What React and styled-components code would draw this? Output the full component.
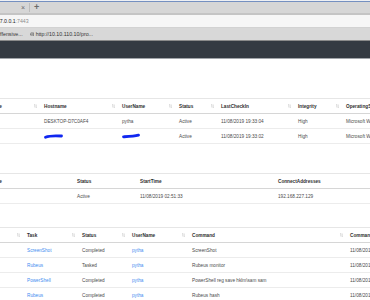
import React from "react";
import styled, { createGlobalStyle } from "styled-components";

const Global = createGlobalStyle`
  html, body { margin: 0; padding: 0; background: #fff; }
  body {
    width: 370px; height: 300px; overflow: hidden;
    font-family: "Liberation Sans", Arial, sans-serif;
  }
`;

const Chrome = styled.div`
  display: flex;
  flex-direction: column;
`;

const TabBar = styled.div`
  height: 12px;
  background: #d6d6d6;
  border-top: 1px solid #eef0f4;
  box-shadow: inset 0 1px 0 #7590c0;
  border-bottom: 2px solid #c4c4c4;
  display: flex;
  align-items: center;
  padding-left: 21px;
  gap: 4px;
  color: #6a6a6a;
`;

const TabClose = styled.span`
  font-size: 7px;
  line-height: 1;
`;

const TabSep = styled.span`
  width: 1px;
  height: 9px;
  background: #bcbcbc;
`;

const TabPlus = styled.span`
  font-size: 9px;
  line-height: 1;
  font-weight: 700;
`;

const AddressBar = styled.div`
  height: 12px;
  background: #f6f6f6;
  border-bottom: 1px solid #d2d2d2;
  display: flex;
  align-items: center;
  overflow: hidden;
`;

const Url = styled.span`
  font-size: 5.2px;
  color: #222;
  margin-left: -6px;
  white-space: nowrap;
`;

const Port = styled.span`
  color: #8c8c8c;
`;

const Bookmarks = styled.div`
  height: 12px;
  background: #d8d8d8;
  display: flex;
  align-items: center;
  gap: 7px;
  overflow: hidden;
  font-size: 5.3px;
  color: #333;
  white-space: nowrap;
`;

const Bookmark = styled.span`
  display: flex;
  align-items: center;
  gap: 1.5px;
  margin-left: ${(p) => p.$offset || 0}px;
`;

const NavBar = styled.div`
  height: 17px;
  background: #343a42;
  border-top: 1px solid #8a8a8a;
  border-bottom: 1px solid #a1a5aa;
`;

const Content = styled.div`
  padding-top: 39px;
  display: flex;
  flex-direction: column;
`;

const Table = styled.table`
  border-collapse: collapse;
  table-layout: fixed;
  margin-left: -16px;
  margin-bottom: ${(p) => p.$gap || 0}px;
  font-size: 4.7px;
  white-space: nowrap;
`;

const Th = styled.th`
  height: 14px;
  padding: 0 2px 0 5px;
  text-align: left;
  font-weight: 600;
  color: #2e2e2e;
  border-top: 1px solid #e6e6e6;
  border-bottom: 1px solid #d6d6d6;
  overflow: hidden;
`;

const ThInner = styled.div`
  display: flex;
  align-items: center;
  justify-content: space-between;
`;

const Td = styled.td`
  height: 14px;
  padding: 0 0 0 5px;
  color: ${(p) => (p.$link ? "#3f8ef0" : "#4a4a4a")};
  border-bottom: 1px solid #ececec;
  overflow: hidden;
`;

const SortIcon = () => (
  <svg width="3" height="4" viewBox="0 0 6 8" style={{ flex: "none" }}>
    <path d="M1.5 7V1M0.3 2.2L1.5 1L2.7 2.2M4.5 1v6M3.3 5.8L4.5 7L5.7 5.8" stroke="#b5b5b5" strokeWidth="0.9" fill="none" />
  </svg>
);

const Globe = () => (
  <svg width="4.5" height="4.5" viewBox="0 0 10 10">
    <circle cx="5" cy="5" r="4.3" fill="#555" />
    <path d="M1 5h8M5 1v8M2.2 2.5h5.6M2.2 7.5h5.6" stroke="#ddd" strokeWidth="0.8" />
    <ellipse cx="5" cy="5" rx="2" ry="4.2" fill="none" stroke="#ddd" strokeWidth="0.8" />
  </svg>
);

const Scribble = ({ w, d }) => (
  <svg width={w} height="6" viewBox={`0 0 ${w} 6`} style={{ display: "block" }}>
    <path d={d} stroke="#1027f0" strokeWidth="2.8" fill="none" strokeLinecap="round" />
  </svg>
);

function DataTable({ cols, headers, rows, sort, gap }) {
  return (
    <Table $gap={gap} style={{ width: cols.reduce((a, b) => a + b, 0) }}>
      <colgroup>
        {cols.map((c, i) => (
          <col key={i} style={{ width: c }} />
        ))}
      </colgroup>
      <thead>
        <tr>
          {headers.map((h, i) => (
            <Th key={i}>
              <ThInner>
                <span>{h}</span>
                {sort && <SortIcon />}
              </ThInner>
            </Th>
          ))}
        </tr>
      </thead>
      <tbody>
        {rows.map((r, ri) => (
          <tr key={ri}>
            {r.map((c, ci) => {
              const obj = c && typeof c === "object" ? c : null;
              return (
                <Td key={ci} $link={obj ? !!obj.link : false}>
                  {obj ? obj.node || obj.text : c}
                </Td>
              );
            })}
          </tr>
        ))}
      </tbody>
    </Table>
  );
}

export default function App() {
  const t1Rows = [
    ["", "DESKTOP-D7C0AF4", "pytha", "Active", "11/08/2019 19:33:04", "High", "Microsoft Windows 10 Pro"],
    [
      "",
      { node: <Scribble w={19} d="M1.5 4.2C5 2.8 10 2.5 17.5 3" /> },
      { node: <Scribble w={18} d="M1.5 3.8C6 3.6 12 3.4 16.5 2.2" /> },
      "Active",
      "11/08/2019 19:33:02",
      "High",
      "Microsoft Windows 10 Pro",
    ],
  ];
  const t3Rows = [
    ["", { text: "ScreenShot", link: true }, "Completed", { text: "pytha", link: true }, "ScreenShot", "11/08/2019 19:40:11"],
    ["", { text: "Rubeus", link: true }, "Tasked", { text: "pytha", link: true }, "Rubeus monitor", "11/08/2019 19:41:02"],
    ["", { text: "PowerShell", link: true }, "Completed", { text: "pytha", link: true }, "PowerShell reg save hklm\\sam sam", "11/08/2019 19:42:37"],
    ["", { text: "Rubeus", link: true }, "Completed", { text: "pytha", link: true }, "Rubeus hash", "11/08/2019 19:43:15"],
  ];
  return (
    <>
      <Global />
      <Chrome>
        <TabBar>
          <TabClose>×</TabClose>
          <TabSep />
          <TabPlus>+</TabPlus>
        </TabBar>
        <AddressBar>
          <Url>
            127.0.0.1<Port>:7443</Port>
          </Url>
        </AddressBar>
        <Bookmarks>
          <Bookmark $offset={-4}>Offensive...</Bookmark>
          <Bookmark>
            <Globe />
            http://10.10.110.10/pro...
          </Bookmark>
        </Bookmarks>
        <NavBar />
      </Chrome>
      <Content>
        <DataTable
          sort
          gap={29}
          cols={[55, 78, 57, 42, 77, 48, 90]}
          headers={["Name", "Hostname", "UserName", "Status", "LastCheckIn", "Integrity", "OperatingSystem"]}
          rows={t1Rows}
        />
        <DataTable
          gap={23}
          cols={[88, 63, 138, 120]}
          headers={["Name", "Status", "StartTime", "ConnectAddresses"]}
          rows={[["", "Active", "11/08/2019 02:51:33", "192.168.227.129"]]}
        />
        <DataTable
          sort
          cols={[38, 55, 50, 60, 158, 80]}
          headers={["Id", "Task", "Status", "UserName", "Command", "CommandTime"]}
          rows={t3Rows}
        />
      </Content>
    </>
  );
}
